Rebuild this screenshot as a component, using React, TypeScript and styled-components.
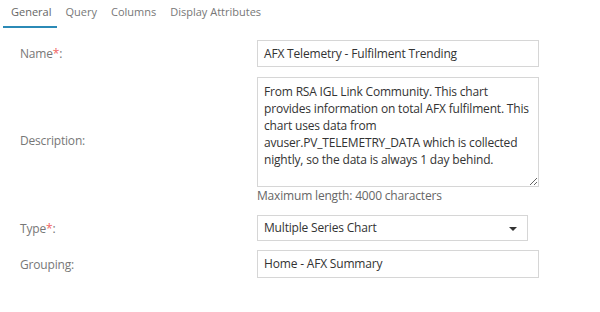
import React from "react";
import styled, { createGlobalStyle } from "styled-components";

const Global = createGlobalStyle`
  html, body { margin: 0; padding: 0; background: #fff; }
  body { font-family: "Open Sans", "Liberation Sans", sans-serif; font-size: 12px; color: #333; }
  * { box-sizing: border-box; }
`;

const Page = styled.div`
  width: 600px;
  height: 312px;
  background: #fff;
`;

const TabBar = styled.div`
  display: flex;
  padding-left: 3px;
  height: 28px;
`;

const Tab = styled.div<{ $active?: boolean }>`
  padding: 5px 6px 0 8px;
  height: 28px;
  line-height: 14px;
  color: ${(p) => (p.$active ? "#666" : "#777")};
  border-bottom: 2px solid ${(p) => (p.$active ? "#2b8ab6" : "transparent")};
  font-size: 11px;
`;

const Form = styled.div`
  padding: 12px 0 0 20px;
  display: flex;
  flex-direction: column;
  letter-spacing: -0.18px;
`;

const Row = styled.div<{ $gap?: number }>`
  display: grid;
  grid-template-columns: 237px 282px;
  align-items: center;
  margin-top: ${(p) => p.$gap ?? 0}px;
`;

const Label = styled.div`
  color: #777;
  font-size: 12px;
`;

const Req = styled.span`
  color: #f06464;
`;

const Field = styled.div`
  display: flex;
  flex-direction: column;
`;

const Input = styled.div<{ $width?: number; $height?: number }>`
  width: ${(p) => p.$width ?? 282}px;
  height: ${(p) => p.$height ?? 27}px;
  border: 1px solid #d6d6d6;
  padding: 0 6px;
  line-height: ${(p) => (p.$height ?? 27) - 2}px;
  color: #333;
  white-space: nowrap;
  position: relative;
`;

const TextArea = styled.textarea`
  width: 282px;
  height: 110px;
  border: 1px solid #d6d6d6;
  padding: 5px 4px 5px 6px;
  font-family: "Open Sans", "Liberation Sans", sans-serif;
  font-size: 12px;
  letter-spacing: -0.18px;
  line-height: 17px;
  color: #333;
  resize: both;
  margin: 0;
  display: block;
  outline: none;
  overflow: hidden;
`;

const Help = styled.div`
  color: #666;
  line-height: 16px;
  margin-top: 1px;
`;

const Caret = styled.span`
  position: absolute;
  right: 10px;
  top: 11px;
  width: 0;
  height: 0;
  border-left: 4px solid transparent;
  border-right: 4px solid transparent;
  border-top: 4px solid #333;
`;

export default function App() {
  return (
    <Page>
      <Global />
      <TabBar>
        <Tab $active>General</Tab>
        <Tab>Query</Tab>
        <Tab>Columns</Tab>
        <Tab>Display Attributes</Tab>
      </TabBar>
      <Form>
        <Row>
          <Label>
            Name<Req>*</Req>:
          </Label>
          <Input>AFX Telemetry - Fulfilment Trending</Input>
        </Row>
        <Row $gap={10}>
          <Label>Description:</Label>
          <Field>
            <TextArea
              readOnly
              defaultValue="From RSA IGL Link Community. This chart provides information on total AFX fulfilment. This chart uses data from avuser.PV_TELEMETRY_DATA which is collected nightly, so the data is always 1 day behind."
            />
            <Help>Maximum length: 4000 characters</Help>
          </Field>
        </Row>
        <Row $gap={11}>
          <Label>
            Type<Req>*</Req>:
          </Label>
          <Input $width={271} $height={26}>
            Multiple Series Chart
            <Caret />
          </Input>
        </Row>
        <Row $gap={9}>
          <Label>Grouping:</Label>
          <Input $height={28}>Home - AFX Summary</Input>
        </Row>
      </Form>
    </Page>
  );
}
